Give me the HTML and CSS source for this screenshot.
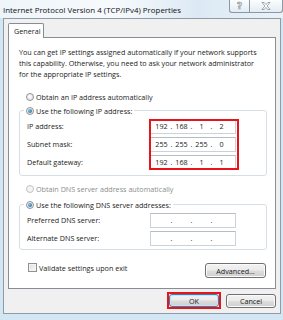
FILE: index.html
```html
<!DOCTYPE html>
<html lang="en">
<head>
    <meta charset="UTF-8">
    <meta name="viewport" content="width=device-width, initial-scale=1.0">
    <title>Internet Protocol Version 4 (TCP/IPv4) Properties</title>
    <link rel="stylesheet" href="styles.css">
</head>
<body>
    <div class="titlebar">
        <span class="caption">Internet Protocol Version 4 (TCP/IPv4) Properties</span>
        <div class="caption-buttons">
            <span class="cap-btn help">?</span>
            <span class="cap-btn close">
                <svg width="10" height="8" viewBox="0 0 10 8">
                    <path d="M1 0.5h2.2l1.8 2.1 1.8-2.1h2.2l-2.9 3.5 2.9 3.5h-2.2l-1.8-2.1-1.8 2.1h-2.2l2.9-3.5z" fill="#fff" stroke="#7b8792" stroke-width="0.7"/>
                </svg>
            </span>
        </div>
    </div>

    <div class="client">
        <div class="tabs"><span class="tab">General</span></div>

        <div class="panel">
            <p class="intro">You can get IP settings assigned automatically if your network supports<br>this capability. Otherwise, you need to ask your network administrator<br>for the appropriate IP settings.</p>

            <label class="option first"><span class="radio"></span>Obtain an IP address automatically</label>

            <fieldset class="group">
                <legend><span class="option"><span class="radio checked"></span>Use the following IP address:</span></legend>
                <div class="rows">
                    <div class="labels">
                        <span>IP address:</span>
                        <span>Subnet mask:</span>
                        <span>Default gateway:</span>
                    </div>
                    <div class="fields marked">
                        <div class="ip"><span class="oct">192</span><span class="dot">.</span><span class="oct">168</span><span class="dot">.</span><span class="oct">1</span><span class="dot">.</span><span class="oct">2</span></div>
                        <div class="ip"><span class="oct">255</span><span class="dot">.</span><span class="oct">255</span><span class="dot">.</span><span class="oct">255</span><span class="dot">.</span><span class="oct">0</span></div>
                        <div class="ip"><span class="oct">192</span><span class="dot">.</span><span class="oct">168</span><span class="dot">.</span><span class="oct">1</span><span class="dot">.</span><span class="oct">1</span></div>
                    </div>
                </div>
            </fieldset>

            <label class="option first second disabled"><span class="radio"></span>Obtain DNS server address automatically</label>

            <fieldset class="group dns">
                <legend><span class="option"><span class="radio checked"></span>Use the following DNS server addresses:</span></legend>
                <div class="rows">
                    <div class="labels">
                        <span>Preferred DNS server:</span>
                        <span>Alternate DNS server:</span>
                    </div>
                    <div class="fields">
                        <div class="ip"><span class="oct"></span><span class="dot">.</span><span class="oct"></span><span class="dot">.</span><span class="oct"></span><span class="dot">.</span><span class="oct"></span></div>
                        <div class="ip"><span class="oct"></span><span class="dot">.</span><span class="oct"></span><span class="dot">.</span><span class="oct"></span><span class="dot">.</span><span class="oct"></span></div>
                    </div>
                </div>
            </fieldset>

            <div class="bottom-row">
                <label class="option check-row"><span class="checkbox"></span>Validate settings upon exit</label>
                <button type="button" class="btn advanced">Advanced...</button>
            </div>
        </div>

        <div class="actions">
            <span class="marked-btn"><button type="button" class="btn ok">OK</button></span>
            <button type="button" class="btn cancel">Cancel</button>
        </div>
    </div>
</body>
</html>
```

FILE: styles.css
```css
body {
    margin: 0;
    width: 283px;
    height: 320px;
    overflow: hidden;
    background: #d3e6f3;
    font-family: "Open Sans", "Liberation Sans", sans-serif;
    font-size: 7.2px;
    color: #1b1b1b;
}

.titlebar {
    height: 18px;
    display: flex;
    justify-content: space-between;
    align-items: flex-start;
    background: linear-gradient(90deg, #eef5fa 0%, #f7fafc 40%, #dce9f4 70%, #eaf2f8 100%);
}

.caption {
    padding: 5px 0 0 3px;
    font-size: 7.9px;
    line-height: 10px;
    color: #111;
    white-space: nowrap;
}

.caption-buttons {
    display: flex;
}

.cap-btn {
    height: 13px;
    box-sizing: border-box;
    border: 1px solid #8a98a6;
    border-top: none;
    background: linear-gradient(#fbfdfe, #e3ebf2);
    display: flex;
    align-items: center;
    justify-content: center;
}

.help {
    width: 20px;
    border-right: none;
    border-radius: 0 0 0 3px;
    font-family: "DejaVu Sans", sans-serif;
    font-size: 9px;
    font-weight: bold;
    color: #fff;
    -webkit-text-stroke: 0.6px #7b8792;
}

.close {
    width: 34px;
    border-radius: 0 0 3px 0;
}

.client {
    margin-left: 3px;
    width: 278px;
    height: 296px;
    box-sizing: border-box;
    border: 1px solid #8f9ba7;
    background: #f0f0f0;
    padding: 4px 4px 0 4px;
}

.tabs {
    display: flex;
}

.tab {
    position: relative;
    z-index: 1;
    height: 15px;
    width: 36px;
    box-sizing: border-box;
    margin-bottom: -1px;
    padding: 2px 0 0 5px;
    line-height: 10px;
    background: #fff;
    border: 1px solid #898c95;
    border-bottom: none;
    border-radius: 2px 2px 0 0;
}

.panel {
    height: 252px;
    box-sizing: border-box;
    background: #fff;
    border: 1px solid #898c95;
    padding: 9px 8px 0 10px;
}

.intro {
    margin: 0;
    line-height: 11px;
    white-space: nowrap;
}

.option {
    display: flex;
    align-items: center;
    gap: 2px;
    height: 11px;
    white-space: nowrap;
}

.option.first {
    margin: 11px 0 0 7px;
}

.option.second {
    margin-top: 7px;
}

.option.disabled {
    color: #8d8d8d;
}

.radio {
    width: 8px;
    height: 8px;
    box-sizing: border-box;
    border: 1px solid #8e9093;
    border-radius: 50%;
    background: radial-gradient(circle at 40% 40%, #ffffff, #dedede);
    display: flex;
    align-items: center;
    justify-content: center;
}

.radio.checked::after {
    content: "";
    width: 4px;
    height: 4px;
    border-radius: 50%;
    background: radial-gradient(circle at 35% 35%, #7fc0ea, #1d5a8c);
}

.disabled .radio {
    border-color: #c3c3c3;
    background: #f4f4f4;
}

.group {
    margin: 3px 0 0;
    padding: 3px 7px 5px;
    border: 1px solid #d5dfe5;
    border-radius: 3px;
    min-width: 0;
}

.group.dns {
    margin-top: 5px;
    padding-bottom: 3px;
}

.group legend {
    padding: 0 2px;
    margin-left: -3px;
}

.rows {
    display: grid;
    grid-template-columns: 122px 90px;
    justify-content: start;
}

.labels {
    display: flex;
    flex-direction: column;
    gap: 3px;
}

.labels span {
    height: 15px;
    line-height: 15px;
    white-space: nowrap;
}

.fields {
    display: flex;
    flex-direction: column;
    gap: 3px;
    width: 86px;
    padding: 0 3px 0 1px;
}

.fields.marked {
    outline: 2px solid #e8141c;
    outline-offset: -2px;
}

.ip {
    height: 15px;
    width: 86px;
    box-sizing: border-box;
    border: 1px solid #cdd2d8;
    border-top-color: #b6bcc4;
    background: #fff;
    display: flex;
    align-items: center;
    padding-left: 2px;
    line-height: 13px;
}

.oct {
    width: 17px;
    text-align: center;
}

.dot {
    width: 3px;
    text-align: center;
}

.bottom-row {
    display: flex;
    justify-content: space-between;
    align-items: flex-start;
    margin-top: 12px;
    padding-right: 1px;
}

.check-row {
    margin-left: 9px;
    gap: 2px;
}

.checkbox {
    width: 9px;
    height: 9px;
    box-sizing: border-box;
    border: 1px solid #8e9093;
    background: linear-gradient(135deg, #dcdcdc, #fbfbfb);
    box-shadow: inset 0 0 0 1px #f4f4f4;
}

.btn {
    font-family: inherit;
    font-size: 7.2px;
    color: #1b1b1b;
    padding: 0;
    box-sizing: border-box;
    border: 1px solid #707070;
    border-radius: 3px;
    background: linear-gradient(#f2f2f2 0%, #ebebeb 48%, #dddddd 52%, #cfcfcf 100%);
    box-shadow: inset 0 0 0 1px #fbfbfb;
}

.advanced {
    width: 61px;
    height: 15px;
    margin-top: 1px;
}

.actions {
    display: flex;
    justify-content: flex-end;
    align-items: flex-start;
    gap: 5px;
    margin-top: 3px;
}

.marked-btn {
    display: flex;
    border: 2px solid #e8141c;
}

.ok {
    width: 50px;
    height: 13px;
    border-color: #3c7fb1;
    box-shadow: inset 0 0 0 1px #bfe6f8;
}

.cancel {
    width: 50px;
    height: 14px;
    margin-top: 2px;
}
```
